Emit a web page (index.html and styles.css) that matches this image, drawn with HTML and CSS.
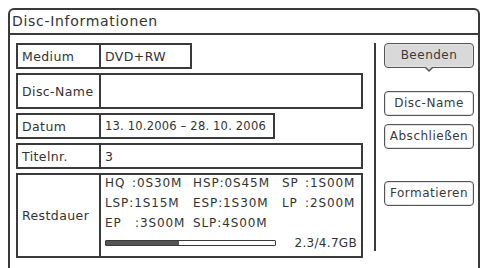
FILE: index.html
```html
<!DOCTYPE html>
<html lang="de">
<head>
<meta charset="utf-8">
<link rel="stylesheet" href="styles.css">
</head>
<body>
<div class="frame">
  <div class="title">Disc-Informationen</div>
  <div class="content">
    <div class="table">
      <div class="row medium">
        <div class="label">Medium</div>
        <div class="value">DVD+RW</div>
      </div>
      <div class="row discname">
        <div class="label">Disc-Name</div>
        <div class="value"></div>
      </div>
      <div class="row datum">
        <div class="label">Datum</div>
        <div class="value date">13. 10.2006 – 28. 10. 2006</div>
      </div>
      <div class="row titel">
        <div class="label">Titelnr.</div>
        <div class="value">3</div>
      </div>
      <div class="row rest">
        <div class="label">Restdauer</div>
        <div class="value restval">
          <div class="modes">
            <div class="mode"><span class="code c2">HQ</span><span>:0S30M</span></div>
            <div class="mode"><span class="code">HSP</span><span>:0S45M</span></div>
            <div class="mode"><span class="code c2s">SP</span><span>:1S00M</span></div>
            <div class="mode"><span class="code">LSP</span><span>:1S15M</span></div>
            <div class="mode"><span class="code">ESP</span><span>:1S30M</span></div>
            <div class="mode"><span class="code c2s">LP</span><span>:2S00M</span></div>
            <div class="mode"><span class="code c2e">EP</span><span>:3S00M</span></div>
            <div class="mode"><span class="code">SLP</span><span>:4S00M</span></div>
          </div>
          <div class="usage">
            <div class="bar"><div class="fill" style="width:43%"></div></div>
            <div class="gb">2.3/4.7GB</div>
          </div>
        </div>
      </div>
    </div>
    <div class="divider"></div>
    <div class="buttons">
      <div class="btn active">Beenden</div>
      <div class="btn b2">Disc-Name</div>
      <div class="btn b3">Abschließen</div>
      <div class="btn b4">Formatieren</div>
    </div>
  </div>
</div>
</body>
</html>
```
FILE: styles.css
```css
* { box-sizing: border-box; }
html, body { margin: 0; padding: 0; background: #fff; }
body {
  width: 484px;
  height: 268px;
  overflow: hidden;
  font-family: "DejaVu Sans", "Liberation Sans", sans-serif;
  color: #333;
  padding: 8px 4px 0 8px;
}
.frame {
  width: 472px;
  height: 262px;
  border: 2px solid #3a3a3a;
  border-bottom: none;
  border-radius: 6px 6px 0 0;
}
.title {
  height: 25px;
  border-bottom: 2px solid #3a3a3a;
  font-size: 14px;
  line-height: 23px;
  padding-left: 2px;
  letter-spacing: 0.7px;
}
.content {
  display: flex;
  padding: 8px 0 0 6px;
}
.table {
  width: 347px;
  display: flex;
  flex-direction: column;
  gap: 4px;
}
.row {
  display: flex;
  border: 2px solid #3a3a3a;
  font-size: 12.5px;
  letter-spacing: 0.4px;
}
.label {
  width: 83px;
  border-right: 2px solid #3a3a3a;
  display: flex;
  align-items: center;
  padding-left: 4px;
}
.value {
  flex: 1;
  display: flex;
  align-items: center;
  padding-left: 4px;
}
.date { font-size: 11.5px; letter-spacing: 0.2px; }
.medium { width: 176px; height: 26px; }
.discname { height: 36px; }
.datum { width: 259px; height: 26px; }
.titel { height: 26px; }
.rest { height: 85px; }
.restval {
  flex-direction: column;
  align-items: stretch;
  padding: 0 4px 0 4px;
  font-size: 12px;
  letter-spacing: 0.9px;
}
.modes {
  display: grid;
  grid-template-columns: 88px 89px 1fr;
  line-height: 20px;
  margin-top: -2px;
}
.mode { display: flex; white-space: nowrap; }
.c2 { width: 27px; }
.c2e { width: 30px; }
.c2s { width: 23px; }
.usage {
  display: flex;
  align-items: center;
  justify-content: space-between;
  height: 19px;
}
.bar {
  width: 171px;
  height: 6px;
  border: 1.5px solid #3a3a3a;
  border-radius: 1px;
  background: #fff;
}
.fill { height: 100%; background: #555; }
.gb { letter-spacing: 0.3px; }
.divider {
  width: 2px;
  height: 208px;
  background: #3a3a3a;
  margin-left: 11px;
}
.buttons {
  display: flex;
  flex-direction: column;
  margin-left: 8px;
  width: 90px;
}
.btn {
  position: relative;
  height: 25px;
  border: 1.5px solid #555;
  border-radius: 4px;
  font-size: 12px;
  letter-spacing: 0.5px;
  text-align: center;
  line-height: 22px;
  color: #3a3a3a;
  background: #fff;
  box-shadow: inset 0 0 0 1px #e2e2e2;
}
.btn.active { background: #d9d9d9; }
.btn.active::before,
.btn.active::after {
  content: "";
  position: absolute;
  left: 50%;
  border-left: 4px solid transparent;
  border-right: 4px solid transparent;
  margin-left: -4px;
}
.btn.active::before {
  bottom: -5px;
  border-top: 4px solid #555;
}
.btn.active::after {
  bottom: -3px;
  border-left-width: 3px;
  border-right-width: 3px;
  margin-left: -3px;
  border-top: 3px solid #d9d9d9;
}
.b2 { margin-top: 23px; }
.b3 { margin-top: 8px; }
.b4 { margin-top: 32px; }
```
